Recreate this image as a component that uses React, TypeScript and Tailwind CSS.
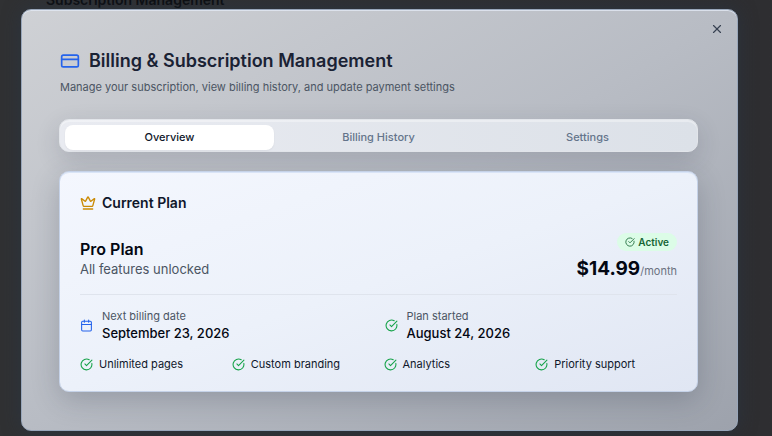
import { Calendar, CircleCheckBig, CreditCard, Crown, X } from "lucide-react";

const tabs = ["Overview", "Billing History", "Settings"];
const features = ["Unlimited pages", "Custom branding", "Analytics", "Priority support"];

function Tabs() {
  return (
    <div
      role="tablist"
      aria-label="Billing sections"
      className="mt-6 grid grid-cols-3 rounded-[10px] border border-[#e2e5ea] bg-linear-to-r from-[#e9ebf1] to-[#dce1e8] p-[5px] pb-px shadow-[inset_0_2px_0_rgba(255,255,255,0.35),0_8px_24px_rgba(30,40,60,0.16)]"
    >
      {tabs.map((tab, i) => (
        <button
          key={tab}
          type="button"
          role="tab"
          aria-selected={i === 0}
          className={
            i === 0
              ? "h-[25px] rounded-lg bg-white pb-0.5 text-[11px] leading-4 font-medium text-[#0f172a] shadow-xs"
              : "h-[25px] rounded-lg pb-0.5 text-[11px] leading-4 font-medium text-[#64748b]"
          }
        >
          {tab}
        </button>
      ))}
    </div>
  );
}

function CurrentPlan() {
  return (
    <section className="mt-[19px] rounded-[10px] border border-[#c5d2e8] bg-linear-to-br from-[#f4f7fe] via-[#ecf1fa] to-[#e0e6f3] px-5 pt-[21px] pb-[19px] shadow-[inset_0_1px_0_rgba(214,226,246,0.9),0_8px_28px_rgba(30,40,60,0.22)]">
      <h2 className="flex items-center gap-[6px] text-[14px] leading-5 font-semibold text-[#0f172a]">
        <Crown className="size-4 text-[#ca8a04]" />
        Current Plan
      </h2>

      <div className="mt-5 flex items-center justify-between border-b border-[#dfe4ed] pb-[13px]">
        <div>
          <h3 className="text-[16px] leading-6 font-semibold text-[#030712]">Pro Plan</h3>
          <p className="text-[13px] leading-4 text-[#4b5563]">All features unlocked</p>
        </div>
        <div className="flex flex-col items-end">
          <span className="flex h-[18px] items-center gap-[3px] rounded-full bg-[#dcfce7] px-2 text-[10px] leading-3 font-semibold text-[#166534]">
            <CircleCheckBig className="size-[10px]" />
            Active
          </span>
          <p className="mt-[6px] text-[19px] leading-6 font-bold text-[#030712]">
            $14.99<span className="text-[11px] leading-none font-normal text-[#6b7280]">/month</span>
          </p>
        </div>
      </div>

      <dl className="mt-[13px] grid grid-cols-2 gap-3">
        <div className="flex items-center gap-[9px]">
          <Calendar className="size-[13px] text-[#2563eb]" />
          <div>
            <dt className="text-[11px] leading-4 text-[#4b5563]">Next billing date</dt>
            <dd className="text-[13px] leading-[18px] font-medium text-[#030712]">September 23, 2026</dd>
          </div>
        </div>
        <div className="flex items-center gap-[9px]">
          <CircleCheckBig className="size-[13px] text-[#16a34a]" />
          <div>
            <dt className="text-[11px] leading-4 text-[#4b5563]">Plan started</dt>
            <dd className="text-[13px] leading-[18px] font-medium text-[#030712]">August 24, 2026</dd>
          </div>
        </div>
      </dl>

      <ul className="mt-[14px] grid grid-cols-4 gap-[10px]">
        {features.map((feature) => (
          <li key={feature} className="flex items-center gap-[6px] text-[11px] leading-4 text-[#0f172a]">
            <CircleCheckBig className="size-[13px] shrink-0 text-[#16a34a]" />
            {feature}
          </li>
        ))}
      </ul>
    </section>
  );
}

export default function App() {
  return (
    <div className="relative min-h-screen overflow-hidden bg-linear-to-r from-[#303133] to-[#2e2e31] pt-[9px] pr-[34px] pb-[5px] pl-[21px] font-['Inter',sans-serif]">
      <p className="absolute -top-2 left-[46px] text-[14px] leading-4 font-semibold text-[#0b0c0f]">
        Subscription Management
      </p>
      <main
        role="dialog"
        aria-labelledby="billing-title"
        className="relative rounded-[10px] border border-[#98a6ba] bg-linear-to-br from-[#cfd1d5] via-[#b8bcc4] to-[#9da2ac] pt-[38px] pr-[39px] pb-[38px] pl-[37px] shadow-[inset_0_1px_0_rgba(226,232,244,0.8),0_0_18px_rgba(40,55,75,0.5)]"
      >
        <button type="button" aria-label="Close" className="absolute top-2 right-[9px] p-1 text-[#374151]">
          <X className="size-[14px]" />
        </button>
        <header className="px-px">
          <h1 id="billing-title" className="flex items-center gap-[9px] text-[18px] leading-[26px] font-semibold text-[#1a2234]">
            <CreditCard className="size-5 text-[#2563eb]" />
            Billing &amp; Subscription Management
          </h1>
          <p className="mt-[5px] text-[11px] leading-4 text-[#4b5563]">
            Manage your subscription, view billing history, and update payment settings
          </p>
        </header>
        <Tabs />
        <CurrentPlan />
      </main>
    </div>
  );
}
